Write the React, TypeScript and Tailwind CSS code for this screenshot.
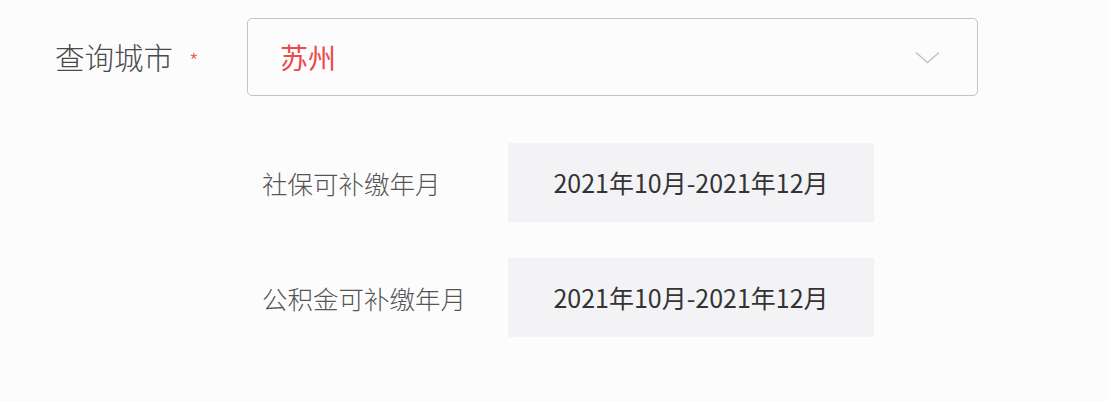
export default function App() {
  const rows = [
    { label: '社保可补缴年月', value: '2021年10月-2021年12月' },
    { label: '公积金可补缴年月', value: '2021年10月-2021年12月' },
  ];

  return (
    <div
      className="h-[402px] w-[1108px] bg-[#fcfcfd] pt-[18px] font-light"
      style={{ fontFamily: '"Noto Sans CJK SC", "Noto Sans", sans-serif' }}
    >
      <div className="flex items-center">
        <div className="flex w-[247px] items-center pl-[55px]">
          <span className="text-[29.5px] leading-none text-[#4a4a4a]">查询城市</span>
          <span className="ml-[16px] mt-[6px] text-[22px] leading-none text-[#ee5a5a]">*</span>
        </div>
        <div className="flex h-[78px] w-[731px] items-center justify-between rounded-[5px] border border-[#c4c4c4] pl-[32px] pr-[37px]">
          <span className="text-[28px] font-normal leading-none text-[#e94b4b]">苏州</span>
          <svg width="25" height="13" viewBox="0 0 25 13" fill="none">
            <path d="M1 1.5 L12.5 11.5 L24 1.5" stroke="#c2c2c2" strokeWidth="1.4" />
          </svg>
        </div>
      </div>

      <div className="mt-[47px] flex flex-col gap-[36px]">
        {rows.map((r) => (
          <div key={r.label} className="flex items-center">
            <div className="w-[508px] pl-[262px] text-[25.5px] leading-none text-[#555]">{r.label}</div>
            <div className="flex h-[79px] w-[366px] items-center justify-center bg-[#f3f3f5] text-[25px] font-normal leading-none text-[#333]">
              {r.value}
            </div>
          </div>
        ))}
      </div>
    </div>
  );
}
